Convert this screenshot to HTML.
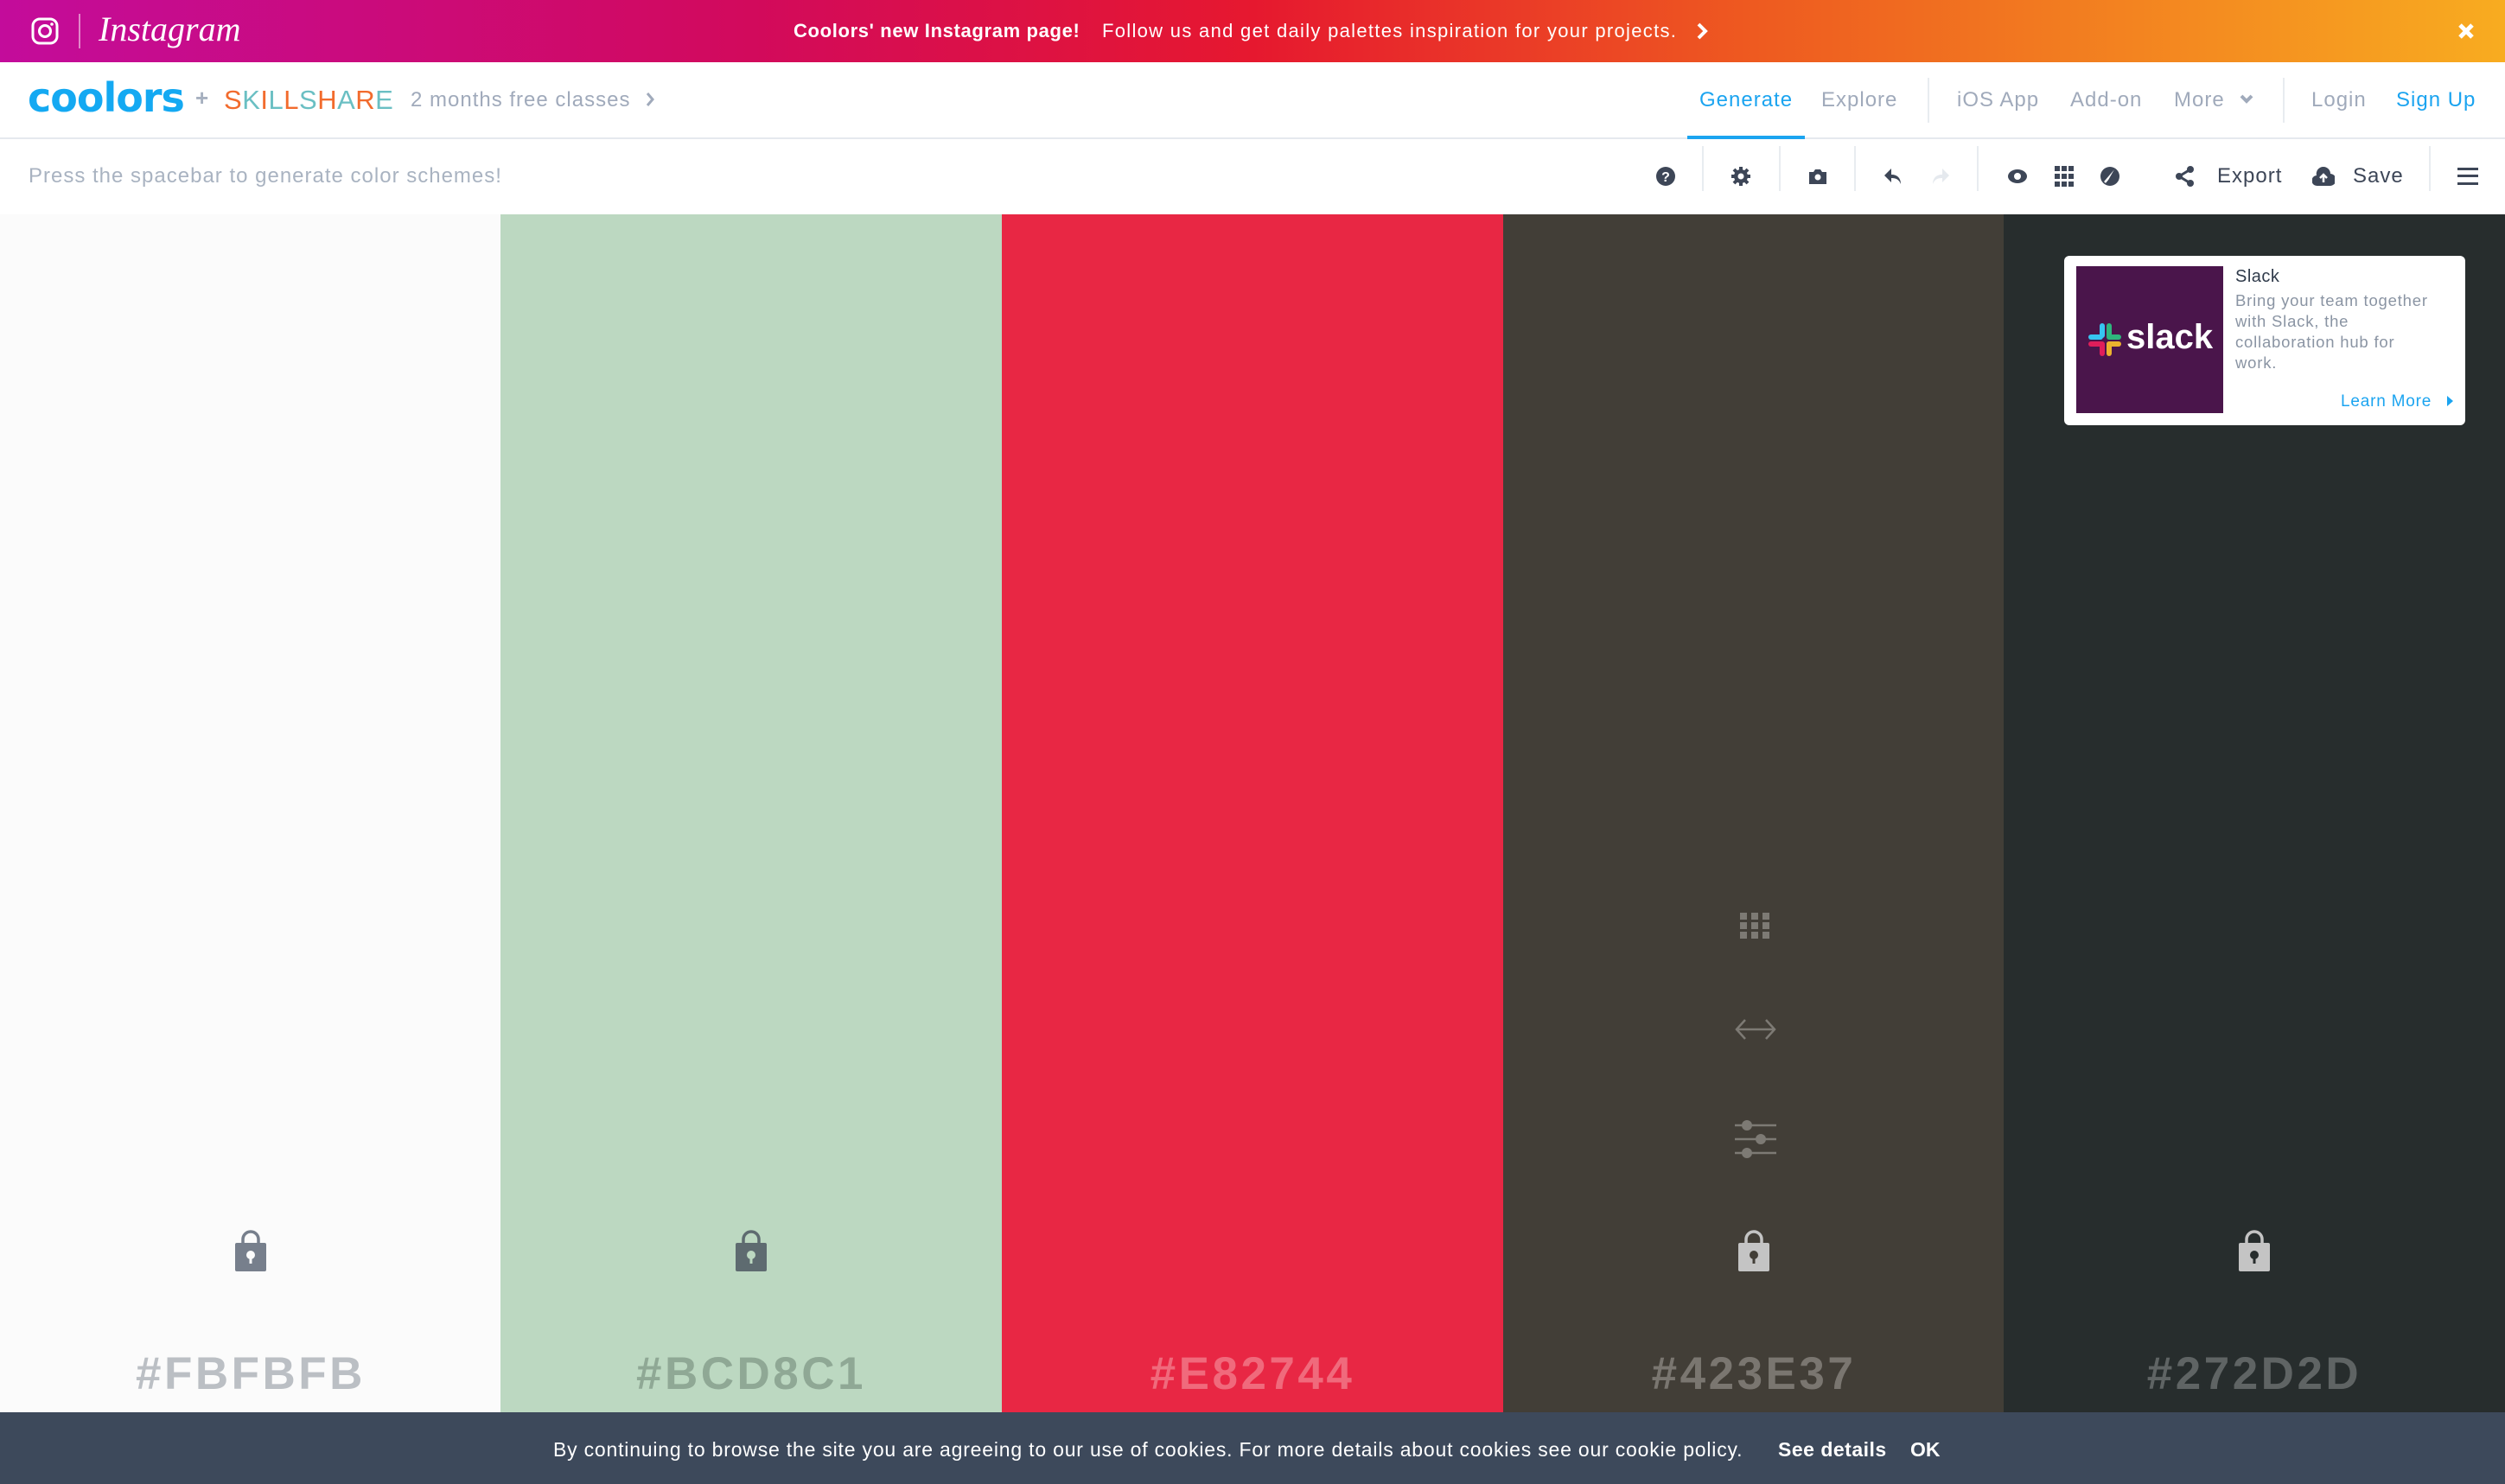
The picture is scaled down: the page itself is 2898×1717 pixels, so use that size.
<!DOCTYPE html>
<html><head><meta charset="utf-8"><style>
*{margin:0;padding:0;box-sizing:border-box}
body{width:2898px;height:1717px;overflow:hidden;font-family:"Liberation Sans",sans-serif;background:#fff;position:relative}
.abs{position:absolute}
#banner{left:0;top:0;width:2898px;height:72px;background:linear-gradient(90deg,#c30c9b 0%,#d20a5c 30%,#e6182f 50%,#ee5a20 70%,#f8ac20 100%);color:#fff}
.t{position:absolute;white-space:nowrap;line-height:1}
#nav{left:0;top:72px;width:2898px;height:89px;border-bottom:2px solid #e5e9ee}
#nav .t,#tb .t{letter-spacing:1px}
#tb{left:0;top:161px;width:2898px;height:87px}
.col{position:absolute;top:248px;height:1386px;width:580px}
.hex{position:absolute;width:100%;text-align:center;top:1315px;font-size:53px;font-weight:bold;letter-spacing:3.5px;line-height:1}
.lock{position:absolute;left:50%;margin-left:-18px;top:1175px}
.sep{position:absolute;width:2px;background:#e8ecf0}
#cookie{left:0;top:1634px;width:2898px;height:83px;background:#3d495b;color:#fff;font-size:23px}
</style></head><body>
<div id="banner" class="abs">
<svg class="abs" style="left:36px;top:20px" width="32" height="32" viewBox="0 0 32 32"><rect x="2" y="2" width="28" height="28" rx="8" fill="none" stroke="#fff" stroke-width="3"/><circle cx="16" cy="16" r="6.5" fill="none" stroke="#fff" stroke-width="3"/><circle cx="24" cy="8" r="1.8" fill="#fff"/></svg>
<div class="abs" style="left:91px;top:16px;width:2px;height:40px;background:rgba(255,255,255,.5)"></div>
<div class="t" style="left:114px;top:14px;font-family:'Liberation Serif',serif;font-style:italic;font-size:40px">Instagram</div>
<div class="t" style="left:918px;top:25px;font-size:22px;font-weight:bold;letter-spacing:0.65px">Coolors' new Instagram page!</div>
<div class="t" style="left:1275px;top:25px;font-size:22px;letter-spacing:1.3px">Follow us and get daily palettes inspiration for your projects.</div>
<svg class="abs" style="left:1962px;top:26px" width="14" height="20" viewBox="0 0 14 20"><path d="M3 2l8 8-8 8" fill="none" stroke="#fff" stroke-width="4"/></svg>
<svg class="abs" style="left:2843px;top:26px" width="20" height="20" viewBox="0 0 20 20"><path d="M3 3l14 14M17 3L3 17" stroke="#fff" stroke-width="5"/></svg>
</div>

<div id="nav" class="abs">
<div class="t" style="left:32px;top:18px;font-size:46px;font-weight:bold;color:#14a9f2;letter-spacing:-1px;font-family:'DejaVu Sans',sans-serif">coolors</div>
<div class="t" style="left:226px;top:28px;font-size:26px;color:#a6b0bf;font-weight:bold">+</div>
<div class="t" style="left:259px;top:28px;font-size:31px;letter-spacing:0.5px"><span style="color:#f26b2d">S</span><span style="color:#6abfc3">K</span><span style="color:#f26b2d">I</span><span style="color:#6abfc3">L</span><span style="color:#f26b2d">L</span><span style="color:#6abfc3">S</span><span style="color:#f26b2d">H</span><span style="color:#6abfc3">A</span><span style="color:#f26b2d">R</span><span style="color:#6abfc3">E</span></div>
<div class="t" style="left:475px;top:32px;font-size:24px;color:#a0aabb">2 months free classes</div>
<svg class="abs" style="left:746px;top:34px" width="12" height="18" viewBox="0 0 12 18"><path d="M3 2l6 7-6 7" fill="none" stroke="#a0aabb" stroke-width="3"/></svg>
<div class="t" style="left:1966px;top:32px;font-size:24px;color:#1ba4f0">Generate</div>
<div class="abs" style="left:1952px;top:85px;width:136px;height:4px;background:#1ba4f0"></div>
<div class="t" style="left:2107px;top:32px;font-size:24px;color:#a0aabb">Explore</div>
<div class="sep" style="left:2230px;top:18px;height:52px"></div>
<div class="t" style="left:2264px;top:32px;font-size:24px;color:#a0aabb">iOS App</div>
<div class="t" style="left:2395px;top:32px;font-size:24px;color:#a0aabb">Add-on</div>
<div class="t" style="left:2515px;top:32px;font-size:24px;color:#a0aabb">More</div>
<svg class="abs" style="left:2590px;top:36px" width="18" height="14" viewBox="0 0 18 14"><path d="M3 3l6 6 6-6" fill="none" stroke="#a0aabb" stroke-width="4"/></svg>
<div class="sep" style="left:2641px;top:18px;height:52px"></div>
<div class="t" style="left:2674px;top:32px;font-size:24px;color:#a0aabb">Login</div>
<div class="t" style="left:2772px;top:32px;font-size:24px;color:#1ba4f0">Sign Up</div>
</div>

<div id="tb" class="abs">
<div class="t" style="left:33px;top:31px;font-size:24px;color:#a9b3c1">Press the spacebar to generate color schemes!</div>
<svg class="abs" style="left:1915px;top:31px" width="24" height="24" viewBox="0 0 24 24"><circle cx="12" cy="12" r="11" fill="#3d4657"/><text x="12" y="18" text-anchor="middle" font-size="16" font-weight="bold" fill="#fff" font-family="Liberation Sans">?</text></svg>
<div class="sep" style="left:1969px;top:8px;height:52px"></div>
<svg class="abs" style="left:2002px;top:31px" width="24" height="24" viewBox="0 0 24 24"><circle cx="12" cy="12" r="8" fill="#3d4657"/><g stroke="#3d4657" stroke-width="4"><path d="M12 1v22M1 12h22M4 4l16 16M20 4L4 20"/></g><circle cx="12" cy="12" r="3.5" fill="#fff"/></svg>
<div class="sep" style="left:2058px;top:8px;height:52px"></div>
<svg class="abs" style="left:2091px;top:31px" width="24" height="24" viewBox="0 0 24 24"><path d="M2 7h5l2-3h6l2 3h5v14H2z" fill="#3d4657"/><circle cx="12" cy="13" r="3.5" fill="#fff"/></svg>
<div class="sep" style="left:2145px;top:8px;height:52px"></div>
<svg class="abs" style="left:2178px;top:31px" width="24" height="24" viewBox="0 0 24 24"><path d="M10 3L2 11l8 8v-5c6 0 9 2 11 7 0-7-4-11-11-11z" fill="#3d4657"/></svg>
<svg class="abs" style="left:2233px;top:31px" width="24" height="24" viewBox="0 0 24 24"><path d="M14 3l8 8-8 8v-5c-6 0-9 2-11 7 0-7 4-11 11-11z" fill="#e5e9ee"/></svg>
<div class="sep" style="left:2287px;top:8px;height:52px"></div>
<svg class="abs" style="left:2322px;top:33px" width="24" height="20" viewBox="0 0 24 20"><ellipse cx="12" cy="10" rx="11" ry="8" fill="#3d4657"/><circle cx="12" cy="10" r="4" fill="#fff"/></svg>
<svg class="abs" style="left:2377px;top:31px" width="22" height="24" viewBox="0 0 22 24"><g fill="#3d4657"><rect x="0" y="0" width="6" height="6"/><rect x="8" y="0" width="6" height="6"/><rect x="16" y="0" width="6" height="6"/><rect x="0" y="9" width="6" height="6"/><rect x="8" y="9" width="6" height="6"/><rect x="16" y="9" width="6" height="6"/><rect x="0" y="18" width="6" height="6"/><rect x="8" y="18" width="6" height="6"/><rect x="16" y="18" width="6" height="6"/></g></svg>
<svg class="abs" style="left:2429px;top:31px" width="24" height="24" viewBox="0 0 24 24"><circle cx="12" cy="12" r="11" fill="#3d4657"/><path d="M18 5L6 19" stroke="#fff" stroke-width="2.5"/><path d="M17 4a10 10 0 0 1 3 14L8 20z" fill="#3d4657"/></svg>
<svg class="abs" style="left:2516px;top:31px" width="24" height="24" viewBox="0 0 24 24"><g fill="#3d4657"><circle cx="18" cy="4" r="4"/><circle cx="5" cy="12" r="4"/><circle cx="18" cy="20" r="4"/></g><path d="M18 4L5 12l13 8" fill="none" stroke="#3d4657" stroke-width="3"/></svg>
<div class="t" style="left:2565px;top:31px;font-size:24px;color:#3d4657">Export</div>
<svg class="abs" style="left:2675px;top:31px" width="26" height="24" viewBox="0 0 26 24"><path d="M13 1a8 8 0 0 1 8 8 6 6 0 0 1-1 14H6A6 6 0 0 1 5 11a8 8 0 0 1 8-10z" fill="#3d4657"/><path d="M13 19v-9M9 14l4-4 4 4" fill="none" stroke="#fff" stroke-width="2.5"/></svg>
<div class="t" style="left:2722px;top:31px;font-size:24px;color:#3d4657">Save</div>
<div class="sep" style="left:2810px;top:8px;height:52px"></div>
<svg class="abs" style="left:2843px;top:33px" width="24" height="20" viewBox="0 0 24 20"><g fill="#3d4657"><rect y="0" width="24" height="3"/><rect y="8" width="24" height="3"/><rect y="17" width="24" height="3"/></g></svg>
</div>

<div class="col" style="left:0;background:#fbfbfb">
<svg class="lock" width="36" height="48" viewBox="0 0 36 48"><path d="M9 16V11a9 9 0 0 1 18 0v5" fill="none" stroke="#777f8c" stroke-width="3.5"/><rect x="0" y="15" width="36" height="33" rx="2" fill="#777f8c"/><circle cx="18" cy="29" r="5" fill="#fbfbfb"/><rect x="16.5" y="30" width="3" height="9" fill="#fbfbfb"/></svg>
<div class="hex" style="color:#bbbfc4">#FBFBFB</div></div>
<div class="col" style="left:579px;background:#bcd8c1">
<svg class="lock" width="36" height="48" viewBox="0 0 36 48"><path d="M9 16V11a9 9 0 0 1 18 0v5" fill="none" stroke="#5e6b70" stroke-width="3.5"/><rect x="0" y="15" width="36" height="33" rx="2" fill="#5e6b70"/><circle cx="18" cy="29" r="5" fill="#bcd8c1"/><rect x="16.5" y="30" width="3" height="9" fill="#bcd8c1"/></svg>
<div class="hex" style="color:#8fa895">#BCD8C1</div></div>
<div class="col" style="left:1159px;background:#e82744">
<div class="hex" style="color:#f06a7c">#E82744</div></div>
<div class="col" style="left:1739px;background:#423e37">
<svg class="abs" style="left:274px;top:808px" width="34" height="30" viewBox="0 0 34 30"><g fill="#7d7a74"><rect x="0" y="0" width="8" height="8"/><rect x="13" y="0" width="8" height="8"/><rect x="26" y="0" width="8" height="8"/><rect x="0" y="11" width="8" height="8"/><rect x="13" y="11" width="8" height="8"/><rect x="26" y="11" width="8" height="8"/><rect x="0" y="22" width="8" height="8"/><rect x="13" y="22" width="8" height="8"/><rect x="26" y="22" width="8" height="8"/></g></svg>
<svg class="abs" style="left:268px;top:930px" width="48" height="26" viewBox="0 0 48 26"><path d="M12 2L2 13l10 11M36 2l10 11-10 11M2 13h44" fill="none" stroke="#7d7a74" stroke-width="2.5"/></svg>
<svg class="abs" style="left:268px;top:1048px" width="48" height="44" viewBox="0 0 48 44"><g stroke="#7d7a74" stroke-width="2.5"><path d="M0 6h48M0 22h48M0 38h48"/></g><g fill="#7d7a74"><circle cx="14" cy="6" r="6"/><circle cx="30" cy="22" r="6"/><circle cx="14" cy="38" r="6"/></g></svg>
<svg class="lock" width="36" height="48" viewBox="0 0 36 48"><path d="M9 16V11a9 9 0 0 1 18 0v5" fill="none" stroke="#c4c4c4" stroke-width="3.5"/><rect x="0" y="15" width="36" height="33" rx="2" fill="#c4c4c4"/><circle cx="18" cy="29" r="5" fill="#423e37"/><rect x="16.5" y="30" width="3" height="9" fill="#423e37"/></svg>
<div class="hex" style="color:#7a7670">#423E37</div></div>
<div class="col" style="left:2318px;background:#272d2d;width:580px">
<svg class="lock" width="36" height="48" viewBox="0 0 36 48"><path d="M9 16V11a9 9 0 0 1 18 0v5" fill="none" stroke="#c4c4c4" stroke-width="3.5"/><rect x="0" y="15" width="36" height="33" rx="2" fill="#c4c4c4"/><circle cx="18" cy="29" r="5" fill="#272d2d"/><rect x="16.5" y="30" width="3" height="9" fill="#272d2d"/></svg>
<div class="hex" style="color:#5f6464">#272D2D</div></div>

<div class="abs" style="left:2388px;top:296px;width:464px;height:196px;background:#fff;border-radius:6px">
<div class="abs" style="left:14px;top:12px;width:170px;height:170px;background:#4a154b">
<svg class="abs" style="left:14px;top:66px" width="38" height="38" viewBox="0 0 38 38"><rect x="13" y="0" width="6" height="17" rx="3" fill="#36c5f0"/><rect x="0" y="13" width="17" height="6" rx="3" fill="#36c5f0"/><rect x="21" y="0" width="6" height="17" rx="3" fill="#2eb67d"/><rect x="21" y="13" width="17" height="6" rx="3" fill="#2eb67d"/><rect x="0" y="21" width="17" height="6" rx="3" fill="#e01e5a"/><rect x="13" y="21" width="6" height="17" rx="3" fill="#e01e5a"/><rect x="21" y="21" width="17" height="6" rx="3" fill="#ecb22e"/><rect x="21" y="21" width="6" height="17" rx="3" fill="#ecb22e"/></svg>
<div class="t" style="left:58px;top:62px;font-size:40px;font-weight:bold;color:#fff">slack</div>
</div>
<div class="t" style="left:198px;top:14px;font-size:20px;color:#2f3a4a;letter-spacing:0.5px">Slack</div>
<div class="abs" style="left:198px;top:40px;width:228px;font-size:18.5px;line-height:24px;color:#8a94a3;letter-spacing:0.8px">Bring your team together with Slack, the collaboration hub for work.</div>
<div class="t" style="left:320px;top:159px;font-size:19px;color:#1ba4f0;letter-spacing:0.8px">Learn More</div>
<svg class="abs" style="left:443px;top:162px" width="8" height="12" viewBox="0 0 8 12"><path d="M0 0l7 6-7 6z" fill="#1ba4f0"/></svg>
</div>

<div id="cookie" class="abs">
<div class="t" style="left:640px;top:32px;letter-spacing:0.8px">By continuing to browse the site you are agreeing to our use of cookies. For more details about cookies see our cookie policy.</div>
<div class="t" style="left:2057px;top:32px;font-weight:bold;letter-spacing:0.5px">See details</div>
<div class="t" style="left:2210px;top:32px;font-weight:bold">OK</div>
</div>
</body></html>
